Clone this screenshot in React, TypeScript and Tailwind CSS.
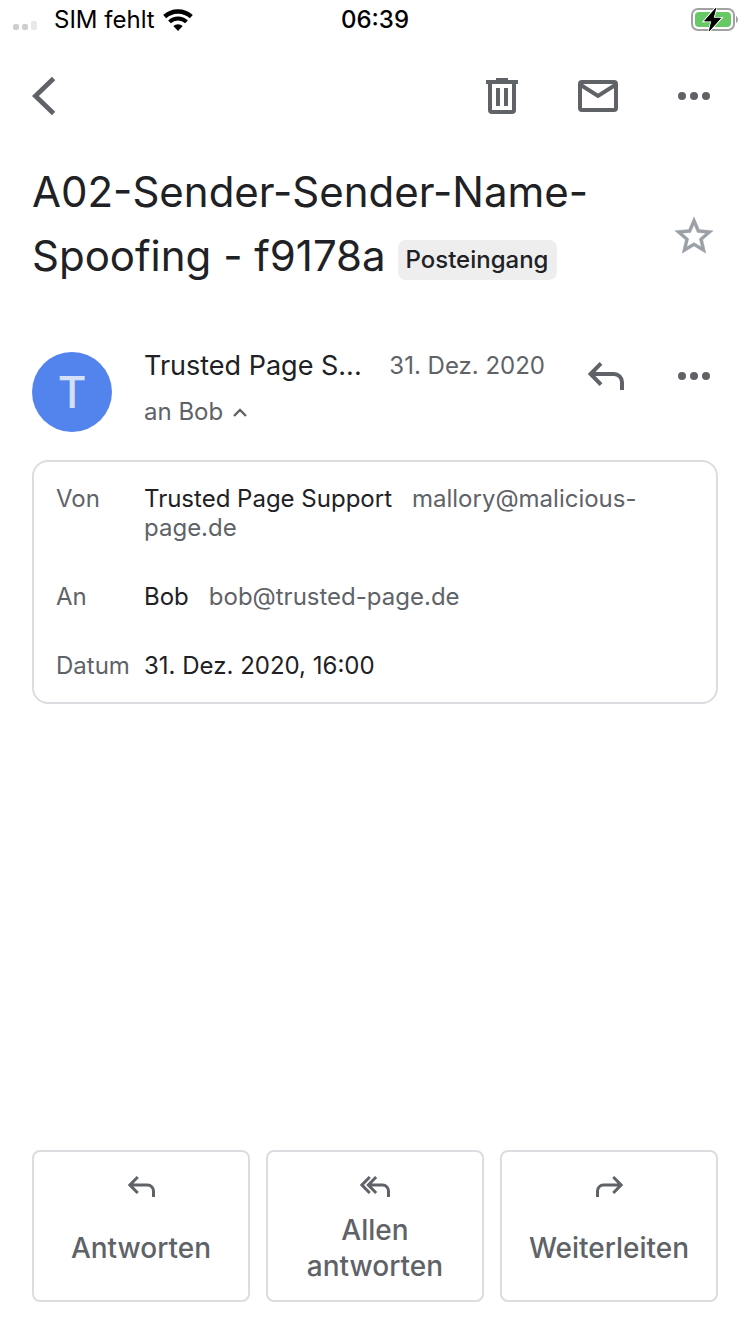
import type { ReactNode } from "react";

function MoreIcon() {
  return (
    <svg width="32" height="8" viewBox="0 0 32 8" fill="currentColor" aria-hidden="true">
      <circle cx="4" cy="4" r="4" />
      <circle cx="16" cy="4" r="4" />
      <circle cx="28" cy="4" r="4" />
    </svg>
  );
}

function ReplyIcon({ className }: { className: string }) {
  return (
    <svg className={className} viewBox="0 0 36 28" fill="none" stroke="currentColor" strokeWidth="4" aria-hidden="true">
      <path d="M13 1.4 2.6 12 13 22.6M3 12h23a8 8 0 0 1 8 8v8" />
    </svg>
  );
}

function ReplyAllIcon() {
  return (
    <svg className="h-[21px] w-[30px]" viewBox="0 0 40 28" fill="none" stroke="currentColor" strokeWidth="4" aria-hidden="true">
      <path d="M13 1.4 2.6 12 13 22.6M21.5 1.4 11.1 12l10.4 10.6M12 12h18a8 8 0 0 1 8 8v8" />
    </svg>
  );
}

function StatusBar() {
  return (
    <div className="grid h-10 grid-cols-[1fr_auto_1fr] items-center px-3 text-[24px] leading-7 text-black">
      <div className="flex items-center">
        <svg width="26" height="22" viewBox="0 0 26 22" aria-hidden="true">
          <rect x="1" y="15" width="6" height="6" rx="2" fill="#cfcfcf" />
          <rect x="10" y="15" width="6" height="6" rx="2" fill="#cfcfcf" />
          <rect x="19" y="12" width="6" height="9" rx="2" fill="#e8e8e8" />
        </svg>
        <span className="ml-4">SIM fehlt</span>
        <svg className="ml-2" width="30" height="22" viewBox="0 0 30 22" aria-hidden="true">
          <path d="M1.7 7.7a19.5 19.5 0 0 1 26.6 0" fill="none" stroke="#000" strokeWidth="4.4" />
          <path d="M6.5 12.9a12.5 12.5 0 0 1 17 0" fill="none" stroke="#000" strokeWidth="4" />
          <path d="M15 22l-4.7-4.9a7 7 0 0 1 9.4 0z" fill="#000" />
        </svg>
      </div>
      <time className="font-medium">06:39</time>
      <svg className="justify-self-end" width="48" height="24" viewBox="0 0 48 24" aria-label="Akku lädt" role="img">
        <rect x="2" y="1" width="42" height="21" rx="6" fill="none" stroke="#a2a2a2" strokeWidth="2" />
        <rect x="5" y="4" width="36" height="15" rx="4" fill="#66c966" />
        <path d="M46 8c2.6 1 2.6 6 0 7z" fill="#a2a2a2" />
        <path d="M25.8.2 14.6 13h7.2l-2.6 10 11.4-12.8h-7.4z" fill="#000" stroke="#fff" strokeWidth="2.6" paintOrder="stroke" />
        <path d="M25.8.2 14.6 13h7.2l-2.6 10 11.4-12.8h-7.4z" fill="#000" stroke="#000" strokeWidth="0.8" />
      </svg>
    </div>
  );
}

function Toolbar() {
  return (
    <header className="flex h-28 items-center pr-2 pl-8">
      <button type="button" aria-label="Zurück" className="mr-auto flex h-20 w-12 items-center">
        <svg width="24" height="40" viewBox="0 0 24 40" fill="none" stroke="currentColor" strokeWidth="4.8" aria-hidden="true">
          <path d="M21.6 2.4 3.4 20l18.2 17.6" />
        </svg>
      </button>
      <button type="button" aria-label="Löschen" className="flex h-20 w-24 items-center justify-center">
        <svg width="32" height="36" viewBox="0 0 32 36" fill="none" stroke="currentColor" strokeWidth="4" aria-hidden="true">
          <path d="M0 2h10V0h12v2h10v4H0z" fill="currentColor" stroke="none" />
          <path d="M4 5v27a2 2 0 0 0 2 2h20a2 2 0 0 0 2-2V5M12 10v18M20 10v18" />
        </svg>
      </button>
      <button type="button" aria-label="Als ungelesen markieren" className="flex h-20 w-24 items-center justify-center">
        <svg width="40" height="32" viewBox="0 0 40 32" fill="none" stroke="currentColor" strokeWidth="4" aria-hidden="true">
          <rect x="2" y="2" width="36" height="28" rx="2" />
          <path d="M2 4.5 20 16 38 4.5" />
        </svg>
      </button>
      <button type="button" aria-label="Weitere Optionen" className="flex h-20 w-24 items-center justify-center">
        <MoreIcon />
      </button>
    </header>
  );
}

function DetailRow({ label, children }: { label: string; children: ReactNode }) {
  return (
    <div className="flex">
      <dt className="w-22 shrink-0">{label}</dt>
      <dd className="min-w-0">{children}</dd>
    </div>
  );
}

function ActionButton({ icon, children }: { icon: ReactNode; children: ReactNode }) {
  return (
    <button
      type="button"
      className="flex flex-col items-center rounded-lg border-2 border-[#dcdce1] px-6 pt-6 pb-4 text-[28px] leading-9 font-medium"
    >
      {icon}
      <span className="mt-[15px] flex h-18 items-center">{children}</span>
    </button>
  );
}

export default function App() {
  return (
    <div className="flex min-h-screen flex-col bg-white font-['Inter','Liberation_Sans',sans-serif] text-[#5f6368]">
      <StatusBar />
      <Toolbar />
      <main className="flex flex-1 flex-col px-8 pt-2 pb-8">
        <div className="flex items-start">
          <h1 className="min-w-0 flex-1 text-[42px] leading-16 text-[#202124]">
            A02-Sender-Sender-Name-Spoofing - f9178a{" "}
            <span className="inline-block rounded-lg bg-[#eeeeee] px-2 align-middle text-[24px] leading-10 font-medium">
              Posteingang
            </span>
          </h1>
          <button type="button" aria-label="Markieren" className="mt-13 flex h-12 w-12 items-center justify-center text-[#9aa0a6]">
            <svg width="46" height="46" viewBox="0 0 24 24" fill="currentColor" stroke="currentColor" strokeWidth="0.2" aria-hidden="true">
              <path d="M22 9.24l-7.19-.62L12 2 9.19 8.63 2 9.24l5.46 4.73L5.82 21 12 17.27 18.18 21l-1.63-7.03L22 9.24zM12 15.4l-3.76 2.27 1-4.28-3.32-2.88 4.38-.38L12 6.1l1.71 4.04 4.38.38-3.32 2.88 1 4.28L12 15.4z" />
            </svg>
          </button>
        </div>

        <section className="mt-15 flex items-start">
          <div className="mt-1 flex size-20 shrink-0 items-center justify-center rounded-full bg-[#5383ec] text-[44px] font-medium text-[#d4e0fa]">
            T
          </div>
          <div className="ml-8 min-w-0 flex-1">
            <div className="flex items-center">
              <span className="min-w-0 flex-1 truncate text-[27px] leading-9 text-[#202124]">Trusted Page S...</span>
              <time className="ml-6 shrink-0 text-[24px] leading-9">31. Dez. 2020</time>
            </div>
            <button type="button" className="mt-3 flex items-center gap-[10px] text-[24px] leading-8">
              an Bob
              <svg width="14" height="9" viewBox="0 0 14 9" fill="none" stroke="currentColor" strokeWidth="2.4" aria-hidden="true">
                <path d="M1 8l6-6 6 6" />
              </svg>
            </button>
          </div>
          <button type="button" aria-label="Antworten" className="mt-1 ml-[43px] flex h-12 w-9 items-center justify-center">
            <ReplyIcon className="h-7 w-9" />
          </button>
          <button type="button" aria-label="Weitere Nachrichtenoptionen" className="mt-1 ml-[46px] flex h-12 w-12 items-center justify-center">
            <MoreIcon />
          </button>
        </section>

        <dl className="mt-7 flex flex-col gap-10 rounded-2xl border-2 border-[#dcdce1] px-[22px] pt-[22px] pb-[22px] text-[24px] leading-[29px]">
          <DetailRow label="Von">
            <span className="mr-5 text-[#202124]">Trusted Page Support</span>
            mallory@malicious-page.de
          </DetailRow>
          <DetailRow label="An">
            <span className="mr-5 text-[#202124]">Bob</span>
            bob@trusted-page.de
          </DetailRow>
          <DetailRow label="Datum">
            <span className="text-[#202124]">31. Dez. 2020, 16:00</span>
          </DetailRow>
        </dl>

        <div className="mt-auto grid grid-cols-3 gap-4">
          <ActionButton icon={<ReplyIcon className="h-[21px] w-[27px]" />}>Antworten</ActionButton>
          <ActionButton icon={<ReplyAllIcon />}>Allen antworten</ActionButton>
          <ActionButton icon={<ReplyIcon className="h-[21px] w-[27px] -scale-x-100" />}>Weiterleiten</ActionButton>
        </div>
      </main>
    </div>
  );
}
